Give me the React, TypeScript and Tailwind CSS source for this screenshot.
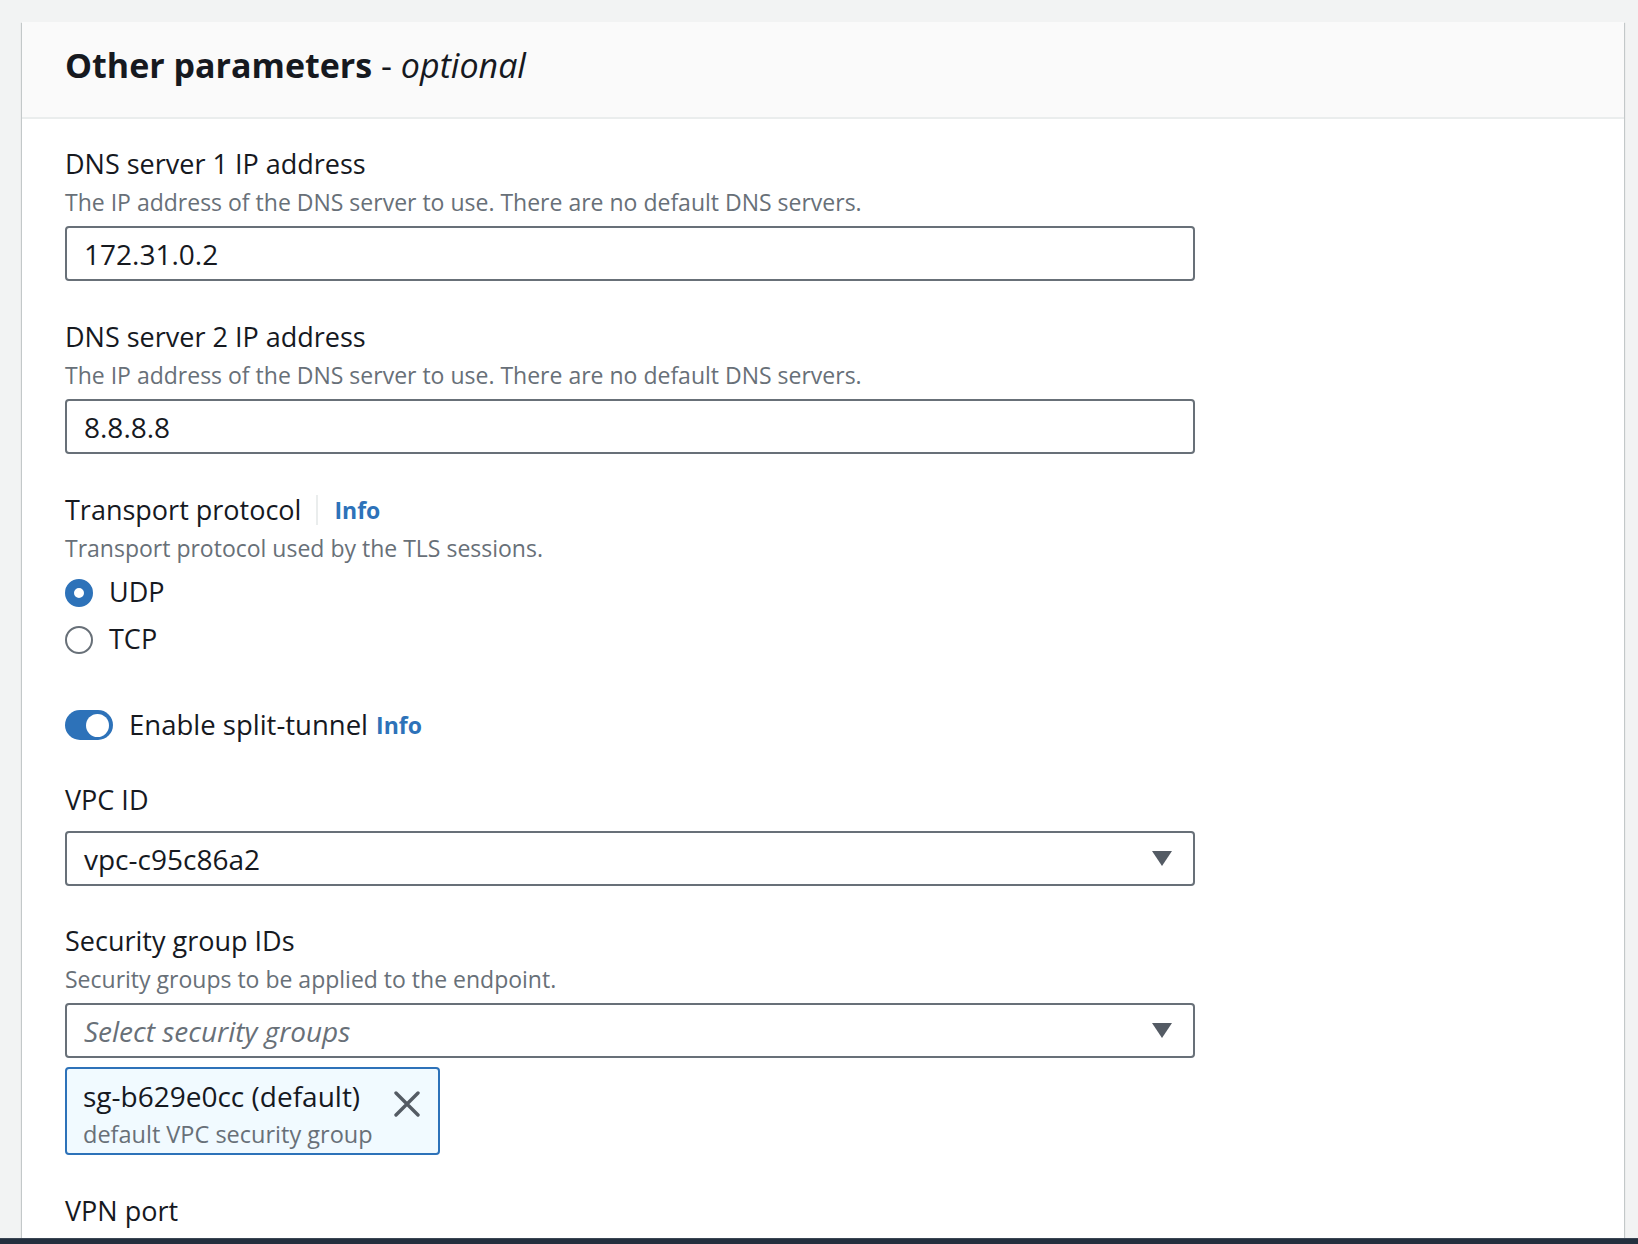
const font = { fontFamily: '"Open Sans", "Noto Sans", Arial, sans-serif' };

function Label({ children }: { children: React.ReactNode }) {
  return <div className="text-[27px] leading-[36px] text-[#16191f]">{children}</div>;
}

function Description({ children }: { children: React.ReactNode }) {
  return <div className="mt-[5px] text-[23px] leading-[30px] text-[#687078]">{children}</div>;
}

function Caret() {
  return (
    <svg width="20" height="15" viewBox="0 0 20 15" className="shrink-0">
      <polygon points="0,0 20,0 10,15" fill="#545b64" />
    </svg>
  );
}

function TextInput({ value }: { value: string }) {
  return (
    <div className="mt-[9px] flex h-[55px] w-[1130px] items-center rounded-[4px] border-2 border-[#687078] bg-white px-[17px] text-[28px] text-[#16191f]">
      {value}
    </div>
  );
}

function SelectBox({ value, placeholder }: { value?: string; placeholder?: string }) {
  return (
    <div className="flex h-[55px] w-[1130px] items-center justify-between rounded-[4px] border-2 border-[#687078] bg-white pl-[17px] pr-[21px] text-[28px]">
      {value ? (
        <span className="text-[#16191f]">{value}</span>
      ) : (
        <span className="italic text-[#687078]">{placeholder}</span>
      )}
      <Caret />
    </div>
  );
}

function Radio({ label, checked }: { label: string; checked?: boolean }) {
  return (
    <div className="flex h-[47px] items-center gap-[16px]">
      {checked ? (
        <span className="h-[28px] w-[28px] rounded-full border-[9px] border-[#2d72b9] bg-white" />
      ) : (
        <span className="h-[28px] w-[28px] rounded-full border-2 border-[#687078] bg-white" />
      )}
      <span className="text-[27px] text-[#16191f]">{label}</span>
    </div>
  );
}

function InfoLink() {
  return <span className="text-[23px] font-bold text-[#2d72b9]">Info</span>;
}

function DismissIcon() {
  return (
    <svg width="26" height="26" viewBox="0 0 26 26" className="mt-[14px] shrink-0">
      <path d="M2 2 L24 24 M24 2 L2 24" stroke="#545b64" strokeWidth="3.4" strokeLinecap="round" fill="none" />
    </svg>
  );
}

export default function App() {
  return (
    <div className="flex h-[1244px] w-[1638px] flex-col overflow-hidden bg-[#f2f3f3]" style={font}>
      <div className="min-h-0 flex-1 overflow-hidden pl-[22px] pr-[14px] pt-[22px]">
        <div className="h-full bg-white shadow-[0_1px_1px_0_rgba(0,28,36,0.3),1px_1px_1px_0_rgba(0,28,36,0.15),-1px_1px_1px_0_rgba(0,28,36,0.15)]">
          {/* Header */}
          <div className="flex h-[97px] items-center border-b-2 border-[#eaeded] bg-[#fafafa] px-[43px] pb-[8px]">
            <h2 className="text-[34px] font-bold text-[#16191f]">
              Other parameters <span className="font-normal">-</span>{" "}
              <span className="font-normal italic">optional</span>
            </h2>
          </div>

          {/* Body */}
          <div className="px-[43px] pt-[27px]">
            <Label>DNS server 1 IP address</Label>
            <Description>The IP address of the DNS server to use. There are no default DNS servers.</Description>
            <TextInput value="172.31.0.2" />

            <div className="mt-[38px]">
              <Label>DNS server 2 IP address</Label>
              <Description>The IP address of the DNS server to use. There are no default DNS servers.</Description>
              <TextInput value="8.8.8.8" />
            </div>

            <div className="mt-[38px]">
              <div className="flex items-center">
                <Label>Transport protocol</Label>
                <span className="ml-[15px] mr-[16px] h-[30px] w-[2px] bg-[#eaeded]" />
                <InfoLink />
              </div>
              <Description>Transport protocol used by the TLS sessions.</Description>
              <div className="mt-[6px]">
                <Radio label="UDP" checked />
                <Radio label="TCP" />
              </div>
            </div>

            <div className="mt-[45px] flex h-[34px] items-center">
              <span className="flex h-[30px] w-[48px] items-center justify-end rounded-full bg-[#2d72b9] pr-[4px]">
                <span className="h-[23px] w-[23px] rounded-full bg-white" />
              </span>
              <span className="ml-[16px] text-[27.5px] text-[#16191f]">Enable split-tunnel</span>
              <span className="ml-[8px]">
                <InfoLink />
              </span>
            </div>

            <div className="mt-[40px]">
              <Label>VPC ID</Label>
              <div className="mt-[13px]">
                <SelectBox value="vpc-c95c86a2" />
              </div>
            </div>

            <div className="mt-[37px]">
              <Label>Security group IDs</Label>
              <Description>Security groups to be applied to the endpoint.</Description>
              <div className="mt-[9px]">
                <SelectBox placeholder="Select security groups" />
              </div>
              <div className="mt-[9px] flex h-[88px] w-[375px] items-start justify-between rounded-[4px] border-2 border-[#2d72b9] bg-[#f1faff] pl-[16px] pr-[18px] pt-[8px]">
                <div>
                  <div className="text-[28px] leading-[38px] text-[#16191f]">sg-b629e0cc (default)</div>
                  <div className="mt-[3px] text-[23.5px] leading-[32px] text-[#687078]">default VPC security group</div>
                </div>
                <DismissIcon />
              </div>
            </div>

            <div className="mt-[38px]">
              <Label>VPN port</Label>
              <Description>The port number to use for the client VPN endpoint. Default port is 443.</Description>
            </div>
          </div>
        </div>
      </div>
      <div className="h-[6px] shrink-0 border-t border-[#3b4654] bg-[#232f3e]" />
    </div>
  );
}
